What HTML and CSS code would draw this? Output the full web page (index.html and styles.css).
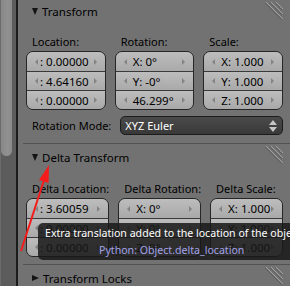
FILE: index.html
```html
<!DOCTYPE html>
<html>
<head>
<meta charset="utf-8">
<link rel="stylesheet" href="styles.css">
</head>
<body>
<div class="app">
  <div class="scrollbar"><div class="thumb"></div></div>
  <div class="vsep"></div>
  <div class="panels">
    <section class="panel">
      <div class="ph first">
        <span class="tri open"></span><span class="ptitle">Transform</span>
        <svg class="grip" width="18" height="18" viewBox="0 0 18 18"><g stroke-width="1"><path d="M1 0L18 17M6 0L18 12M11 0L18 7" stroke="#a0a0a0"/><path d="M0 1L17 18M5 1L17 13M10 1L17 8" stroke="#5e5e5e"/></g></svg>
      </div>
      <div class="grid3">
        <div class="col">
          <div class="lbl">Location:</div>
          <div class="fbox loc">
            <div class="nf"><span class="al"></span><span class="v">: 0.00000</span><span class="ar"></span></div>
            <div class="nf"><span class="al"></span><span class="v">: 4.64160</span><span class="ar"></span></div>
            <div class="nf"><span class="al"></span><span class="v">: 0.00000</span><span class="ar"></span></div>
          </div>
        </div>
        <div class="col">
          <div class="lbl">Rotation:</div>
          <div class="fbox">
            <div class="nf"><span class="al"></span><span class="v">X: 0°</span><span class="ar"></span></div>
            <div class="nf"><span class="al"></span><span class="v">Y: -0°</span><span class="ar"></span></div>
            <div class="nf"><span class="al"></span><span class="v">46.299°</span><span class="ar"></span></div>
          </div>
        </div>
        <div class="col">
          <div class="lbl">Scale:</div>
          <div class="fbox">
            <div class="nf"><span class="al"></span><span class="v">X: 1.000</span><span class="ar"></span></div>
            <div class="nf"><span class="al"></span><span class="v">Y: 1.000</span><span class="ar"></span></div>
            <div class="nf"><span class="al"></span><span class="v">Z: 1.000</span><span class="ar"></span></div>
          </div>
        </div>
      </div>
      <div class="mode">
        <span class="mode-lbl">Rotation Mode:</span>
        <div class="menu"><span>XYZ Euler</span>
          <svg class="updown" width="8" height="12" viewBox="0 0 8 12"><path d="M4 0L8 5H0Z M4 12L8 7H0Z" fill="#c4c4c4"/></svg>
        </div>
      </div>
    </section>

    <section class="panel delta">
      <div class="ph">
        <span class="tri open"></span><span class="ptitle">Delta Transform</span>
        <svg class="grip" width="18" height="18" viewBox="0 0 18 18"><g stroke-width="1"><path d="M1 0L18 17M6 0L18 12M11 0L18 7" stroke="#a0a0a0"/><path d="M0 1L17 18M5 1L17 13M10 1L17 8" stroke="#5e5e5e"/></g></svg>
      </div>
      <div class="grid3">
        <div class="col">
          <div class="lbl">Delta Location:</div>
          <div class="fbox loc">
            <div class="nf"><span class="al"></span><span class="v">: 3.60059</span><span class="ar"></span></div>
            <div class="nf"><span class="al"></span><span class="v">: 0.00000</span><span class="ar"></span></div>
            <div class="nf"><span class="al"></span><span class="v">: 0.00000</span><span class="ar"></span></div>
          </div>
        </div>
        <div class="col">
          <div class="lbl">Delta Rotation:</div>
          <div class="fbox">
            <div class="nf"><span class="al"></span><span class="v">X: 0°</span><span class="ar"></span></div>
            <div class="nf"><span class="al"></span><span class="v">Y: 0°</span><span class="ar"></span></div>
            <div class="nf"><span class="al"></span><span class="v">Z: 0°</span><span class="ar"></span></div>
          </div>
        </div>
        <div class="col">
          <div class="lbl">Delta Scale:</div>
          <div class="fbox">
            <div class="nf"><span class="al"></span><span class="v">X: 1.000</span><span class="ar"></span></div>
            <div class="nf"><span class="al"></span><span class="v">Y: 1.000</span><span class="ar"></span></div>
            <div class="nf"><span class="al"></span><span class="v">Z: 1.000</span><span class="ar"></span></div>
          </div>
        </div>
      </div>
    </section>

    <section class="panel">
      <div class="ph">
        <span class="tri closed"></span><span class="ptitle">Transform Locks</span>
        <svg class="grip" width="18" height="18" viewBox="0 0 18 18"><g stroke-width="1"><path d="M1 0L18 17M6 0L18 12M11 0L18 7" stroke="#a0a0a0"/><path d="M0 1L17 18M5 1L17 13M10 1L17 8" stroke="#5e5e5e"/></g></svg>
      </div>
    </section>
  </div>

  <div class="tooltip">
    <div class="tt-line">Extra translation added to the location of the object.</div>
    <div class="tt-line py">Python: Object.delta_location</div>
  </div>

  <svg class="annot" width="290" height="286" viewBox="0 0 290 286">
    <line x1="21" y1="251" x2="45" y2="177" stroke="#f51c1c" stroke-width="2"/>
    <polygon points="49,165 39,180 48.6,183" fill="#f51c1c"/>
  </svg>
</div>
</body>
</html>
```

FILE: styles.css
```css
* { box-sizing: border-box; }
html, body { margin: 0; padding: 0; }
body {
  width: 290px;
  height: 286px;
  overflow: hidden;
  background: #727272;
  font-family: "Noto Sans", "DejaVu Sans", sans-serif;
  color: #000;
}
.app {
  position: relative;
  display: flex;
  width: 290px;
  height: 286px;
  overflow: hidden;
}
.scrollbar {
  width: 16px;
  flex: none;
  background: #5c5c5c;
  border-left: 1px solid #6b6b6b;
}
.thumb {
  width: 11px;
  height: 156px;
  background: linear-gradient(90deg, #878787, #919191 60%, #8a8a8a);
  border-radius: 0 0 6px 6px;
}
.vsep {
  width: 2px;
  flex: none;
  background: #1c1c1c;
}
.panels {
  flex: 1;
  display: flex;
  flex-direction: column;
  min-width: 0;
}
.panel {
  padding: 0 7px 8px 8px;
}
.panel.delta { padding-bottom: 7px; }

.ph {
  display: flex;
  align-items: center;
  height: 27px;
  margin: 0 -7px 0 -3px;
  padding: 0 7px 0 9px;
  border-top: 1px solid #525252;
  font-size: 11.5px;
}
.ph.first {
  height: 23px;
  border-top: none;
}
.tri {
  width: 0;
  height: 0;
  margin-right: 4px;
  flex: none;
}
.tri.open {
  border-left: 3.5px solid transparent;
  border-right: 3.5px solid transparent;
  border-top: 7px solid #141414;
}
.tri.closed {
  border-top: 3.5px solid transparent;
  border-bottom: 3.5px solid transparent;
  border-left: 7px solid #141414;
}
.ptitle { white-space: nowrap; }
.grip {
  margin-left: auto;
  align-self: flex-start;
  margin-top: 2px;
  flex: none;
}

.grid3 {
  display: grid;
  grid-template-columns: repeat(3, 1fr);
  column-gap: 9px;
}
.lbl {
  font-size: 11px;
  line-height: 16px;
  height: 16px;
  margin: 11px 0 1px;
  padding-left: 6px;
  white-space: nowrap;
}
.fbox {
  border: 1px solid #262626;
  border-radius: 7px;
  overflow: hidden;
}
.nf {
  height: 19px;
  display: flex;
  align-items: center;
  padding: 0 8px 0 8px;
  font-size: 11.5px;
  white-space: nowrap;
  background: linear-gradient(#bdbdbd, #a9a9a9);
}
.nf + .nf { border-top: 1px solid #3a3a3a; }
.al, .ar {
  width: 0;
  height: 0;
  flex: none;
  border-top: 3px solid transparent;
  border-bottom: 3px solid transparent;
}
.al { border-right: 3px solid #838383; }
.ar { border-left: 3px solid #838383; margin-left: auto; }
.v { margin-left: 6px; }
.loc .v { margin-left: 2px; }

.mode {
  display: grid;
  grid-template-columns: repeat(3, 1fr);
  column-gap: 9px;
  align-items: center;
  margin-top: 6px;
}
.mode-lbl {
  font-size: 11px;
  padding-left: 6px;
  white-space: nowrap;
}
.menu {
  grid-column: 2 / 4;
  height: 19px;
  display: flex;
  align-items: center;
  padding: 0 5px 0 4px;
  border: 1px solid #1c1c1c;
  border-radius: 5px;
  background: linear-gradient(#4a4a4a, #393939);
  color: #fff;
  font-size: 11px;
}
.updown { margin-left: auto; }

.tooltip {
  position: absolute;
  left: 38px;
  top: 223px;
  width: 330px;
  height: 37px;
  padding: 2px 7px;
  border-radius: 5px;
  background: rgba(25, 25, 25, 0.86);
  color: #fff;
  font-size: 10.6px;
  line-height: 17px;
  white-space: nowrap;
}
.py {
  color: #a3a3e8;
  padding-left: 54px;
}
.annot {
  position: absolute;
  left: 0;
  top: 0;
  pointer-events: none;
}
```
